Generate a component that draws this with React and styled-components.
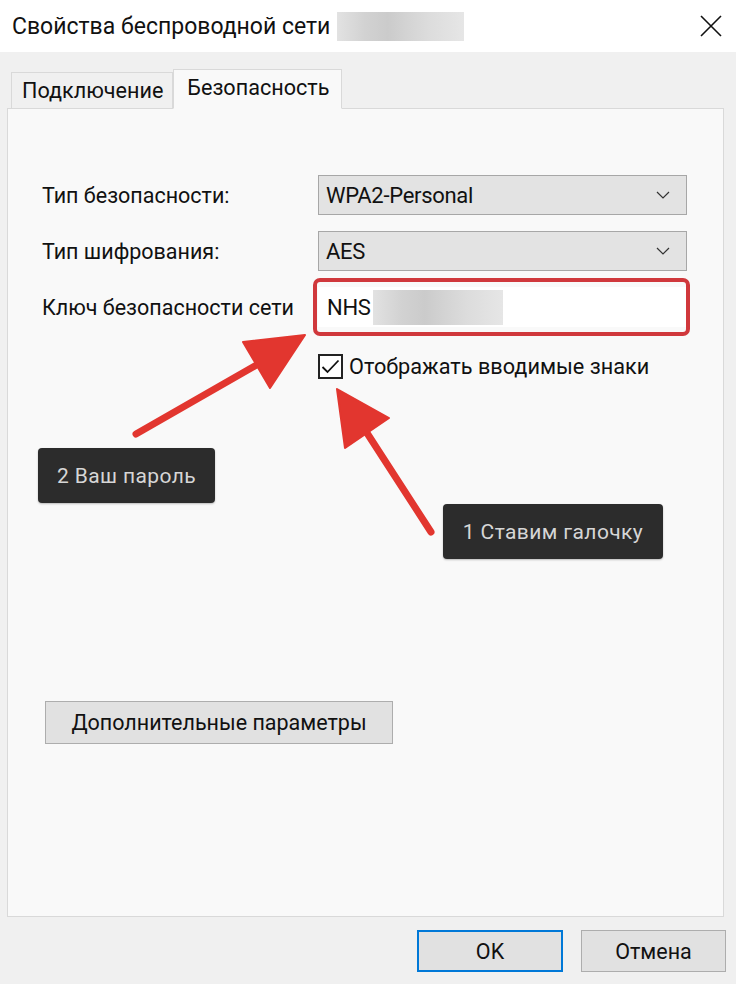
import React from 'react';
import styled, { createGlobalStyle } from 'styled-components';

const GlobalStyle = createGlobalStyle`
  html, body {
    margin: 0;
    padding: 0;
    background: #f0f0f0;
  }
  body {
    font-family: Roboto, "Noto Sans", "Liberation Sans", sans-serif;
    color: #000;
  }
`;

const Window = styled.div`
  position: relative;
  width: 736px;
  height: 984px;
  display: flex;
  flex-direction: column;
  background: #f0f0f0;
  overflow: hidden;
`;

const TitleBar = styled.div`
  height: 52px;
  flex: none;
  background: #fff;
  display: flex;
  align-items: center;
  justify-content: space-between;
  padding: 0 14px 0 12px;
`;

const Title = styled.div`
  display: flex;
  align-items: center;
  gap: 7px;
  font-size: 23px;
  color: #111;
`;

const Redacted = styled.span`
  display: inline-block;
  width: ${(p) => p.$w}px;
  height: ${(p) => p.$h}px;
  background: linear-gradient(
    90deg,
    #e2e2e2 0%,
    #d2d2d2 22%,
    #cbcbcb 40%,
    #d5d5d5 58%,
    #dcdcdc 72%,
    #e6e6e6 100%
  );
`;

const Body = styled.div`
  flex: 1;
  display: flex;
  flex-direction: column;
  padding: 17px 12px 12px 7px;
`;

const TabStrip = styled.div`
  display: flex;
  align-items: flex-end;
  padding-left: 4px;
  position: relative;
  z-index: 1;
`;

const Tab = styled.div`
  height: ${(p) => (p.$active ? 40 : 36)}px;
  box-sizing: border-box;
  display: flex;
  align-items: center;
  padding: 0 ${(p) => (p.$active ? 12 : 9)}px 0 ${(p) => (p.$active ? 13 : 10)}px;
  font-size: 21.6px;
  color: #111;
  background: ${(p) => (p.$active ? '#f9f9f9' : '#f0f0f0')};
  border: 1px solid #d9d9d9;
  border-bottom: ${(p) => (p.$active ? '1px solid #f9f9f9' : 'none')};
  margin-bottom: ${(p) => (p.$active ? -1 : 0)}px;
  padding-bottom: ${(p) => (p.$active ? 4 : 0)}px;
`;

const Panel = styled.div`
  flex: 1;
  background: #f9f9f9;
  border: 1px solid #d9d9d9;
  display: flex;
  flex-direction: column;
  padding: 66px 0 0 34px;
`;

const FormGrid = styled.div`
  display: grid;
  grid-template-columns: 276px 369px;
  row-gap: 16px;
  align-items: center;
`;

const Label = styled.div`
  font-size: 21.5px;
  color: #111;
`;

const Select = styled.div`
  height: 40px;
  box-sizing: border-box;
  background: #e3e3e3;
  border: 1px solid #a7a7a7;
  display: flex;
  align-items: center;
  justify-content: space-between;
  padding: 0 16px 0 7px;
  font-size: 22px;
  letter-spacing: -0.3px;
  color: #111;
`;

const Chevron = () => (
  <svg width="14" height="8" viewBox="0 0 14 8">
    <polyline points="1,1 7,7 13,1" fill="none" stroke="#333" strokeWidth="1.2" />
  </svg>
);

const InputFrame = styled.div`
  position: relative;
  height: 40px;
  box-sizing: border-box;
  background: #fff;
  display: flex;
  align-items: center;
  padding-left: 9px;
  gap: 2px;
  font-size: 22px;
  letter-spacing: -0.3px;
  color: #111;

  &::before {
    content: '';
    position: absolute;
    top: -9px;
    bottom: -9px;
    left: -5px;
    right: -3px;
    border: 4px solid #d0383c;
    border-radius: 7px;
    pointer-events: none;
  }
`;

const CheckRow = styled.label`
  grid-column: 2;
  display: flex;
  align-items: center;
  gap: 6px;
  margin-top: 11px;
  font-size: 21.7px;
  color: #111;
`;

const Box = styled.span`
  width: 25px;
  height: 25px;
  box-sizing: border-box;
  border: 2px solid #222;
  background: #fff;
  display: flex;
  align-items: center;
  justify-content: center;
`;

const WideButton = styled.button`
  align-self: flex-start;
  margin: 322px 0 0 3px;
  width: 348px;
  height: 43px;
  background: #e1e1e1;
  border: 1px solid #adadad;
  font-family: inherit;
  font-size: 21.5px;
  color: #111;
`;

const Footer = styled.div`
  display: flex;
  justify-content: flex-end;
  gap: 18px;
  padding-top: 13px;
  margin-right: -2px;
`;

const DialogButton = styled.button`
  width: ${(p) => (p.$primary ? 146 : 145)}px;
  height: 42px;
  box-sizing: border-box;
  background: #e1e1e1;
  border: ${(p) => (p.$primary ? '2px solid #0078d7' : '1px solid #adadad')};
  font-family: inherit;
  font-size: 21.5px;
  color: #111;
`;

const Overlay = styled.svg`
  position: absolute;
  left: 0;
  top: 0;
  pointer-events: none;
`;

const Callout = styled.div`
  position: absolute;
  left: ${(p) => p.$x}px;
  top: ${(p) => p.$y}px;
  width: ${(p) => p.$w}px;
  height: 55px;
  box-sizing: border-box;
  background: #2c2c2c;
  border-radius: 4px;
  display: flex;
  align-items: center;
  justify-content: center;
  color: #d6d6d6;
  font-size: 21px;
  letter-spacing: 0.4px;
  box-shadow: 0 1px 2px rgba(0, 0, 0, 0.25);
`;

const Arrow = ({ tail, tip, base1, base2 }) => {
  const mid = [(base1[0] + base2[0]) / 2, (base1[1] + base2[1]) / 2];
  return (
    <g fill="#e2362f" stroke="#e2362f">
      <line
        x1={tail[0]}
        y1={tail[1]}
        x2={mid[0]}
        y2={mid[1]}
        strokeWidth="7"
        strokeLinecap="round"
      />
      <polygon
        points={`${tip.join(',')} ${base1.join(',')} ${base2.join(',')}`}
        strokeWidth="2"
        strokeLinejoin="round"
      />
    </g>
  );
};

export default function App() {
  return (
    <>
      <GlobalStyle />
      <Window>
        <TitleBar>
          <Title>
            Свойства беспроводной сети
            <Redacted $w={127} $h={29} />
          </Title>
          <svg width="22" height="22" viewBox="0 0 22 22">
            <path d="M1 1 L21 21 M21 1 L1 21" stroke="#111" strokeWidth="1.6" />
          </svg>
        </TitleBar>
        <Body>
          <TabStrip>
            <Tab>Подключение</Tab>
            <Tab $active>Безопасность</Tab>
          </TabStrip>
          <Panel>
            <FormGrid>
              <Label>Тип безопасности:</Label>
              <Select>
                WPA2-Personal
                <Chevron />
              </Select>
              <Label>Тип шифрования:</Label>
              <Select>
                AES
                <Chevron />
              </Select>
              <Label>Ключ безопасности сети</Label>
              <InputFrame>
                NHS
                <Redacted $w={130} $h={35} />
              </InputFrame>
              <CheckRow>
                <Box>
                  <svg width="19" height="15" viewBox="0 0 19 15">
                    <polyline points="1.5,8 6.5,13 17.5,1.5" fill="none" stroke="#111" strokeWidth="1.8" />
                  </svg>
                </Box>
                Отображать вводимые знаки
              </CheckRow>
            </FormGrid>
            <WideButton>Дополнительные параметры</WideButton>
          </Panel>
          <Footer>
            <DialogButton $primary>OK</DialogButton>
            <DialogButton>Отмена</DialogButton>
          </Footer>
        </Body>

        <Overlay width="736" height="984" viewBox="0 0 736 984">
          <Arrow tail={[136, 434]} tip={[305, 335]} base1={[243, 342]} base2={[270, 388]} />
          <Arrow tail={[431, 532]} tip={[337, 389]} base1={[389, 418]} base2={[345, 448]} />
        </Overlay>
        <Callout $x={38} $y={448} $w={177}>2 Ваш пароль</Callout>
        <Callout $x={443} $y={504} $w={220}>1 Ставим галочку</Callout>
      </Window>
    </>
  );
}
